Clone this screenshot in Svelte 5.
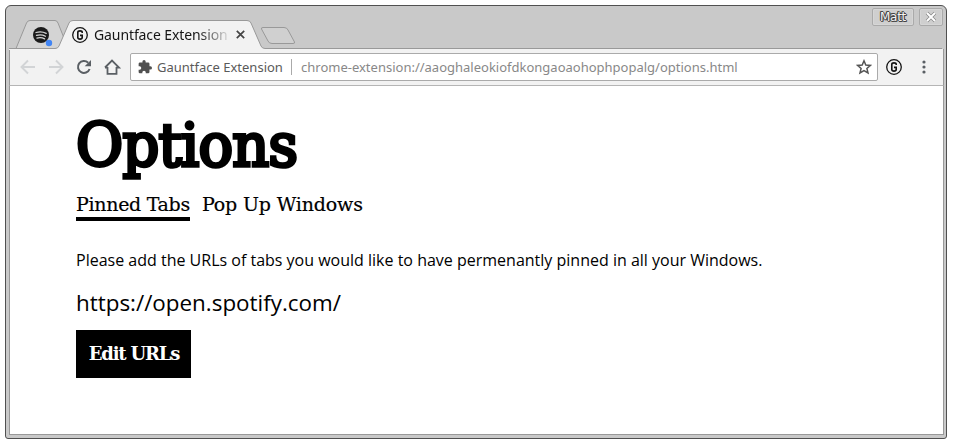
<script>
  const tabs = ['Pinned Tabs', 'Pop Up Windows'];
  let active = $state(0);
</script>

{#snippet gmark()}
  <svg class="g" width="18" height="18" viewBox="0 0 18 18" fill="none" stroke="#151515">
    <circle cx="9" cy="9" r="7.3" stroke-width="1.3" />
    <path d="M11.2 7V6.3Q11.2 4.9 9 4.9T6.8 6.5V11.5Q6.8 13.1 9 13.1T11.2 11.5V9.4H9" stroke-width="1.6" />
  </svg>
{/snippet}

<div class="window">
  <header class="strip">
    <svg class="shapes" width="933" height="44" viewBox="9 6 933 44">
      <path d="M16 48.5L26.5 23Q27.5 20.5 30 20.5H55Q57 20.5 58 23L66 43V48.5Z" fill="#d4d4d4" stroke="#999" />
      <path d="M8 48.5H55Q58 48.5 59 46L69 23Q70 20.5 73 20.5H247Q250 20.5 251 23L261 46Q262 48.5 265 48.5H943V51H8Z" fill="#f2f2f2" stroke="#999" />
      <path d="M263 27.5H284Q287 27.5 288 30L294.5 42Q295 43.5 293 43.5H272Q269 43.5 268 41L261.5 29Q261 27.5 263 27.5Z" fill="#d0d0d0" stroke="#999" />
    </svg>
    <div class="tabs">
      <svg class="spotify" width="22" height="22" viewBox="0 0 22 22" fill="none">
        <circle cx="9" cy="9" r="8" fill="#1b1b1b" />
        <path d="M4 6.5Q9.5 4.8 14.2 7.4M4.5 9.4Q9.3 8 13.4 10.2M5 12.1Q9.2 11 12.6 12.9" stroke="#d4d4d4" stroke-width="1.3" stroke-linecap="round" />
        <circle cx="17" cy="17" r="3.2" fill="#4285f4" />
      </svg>
      {@render gmark()}
      <span class="title">Gauntface Extension</span>
      <svg class="close" width="9" height="9" viewBox="0 0 9 9" stroke="#444" stroke-width="1.7"><path d="M.8.8L8.2 8.2M8.2.8L.8 8.2" /></svg>
    </div>
    <div class="controls">
      <span class="ctl user">Matt</span>
      <span class="ctl x"><svg width="12" height="12" viewBox="0 0 12 12"><path d="M2 2L10 10M10 2L2 10" stroke="#888" stroke-width="3.4" /><path d="M2 2L10 10M10 2L2 10" stroke="#fff" stroke-width="2" /></svg></span>
    </div>
  </header>

  <div class="toolbar">
    <svg class="nav-icons" width="112" height="24" viewBox="10 55 112 24" fill="none">
      <path d="M35 67H22M28 60.5L21.5 67L28 73.5M49 67H62M56 60.5L62.5 67L56 73.5" stroke="#d2d4d6" stroke-width="1.9" />
      <path d="M88.2 62.7A6 6 0 1 0 89.6 69" stroke="#5a5f64" stroke-width="2" />
      <path d="M91 60V66.3H84.7Z" fill="#5a5f64" />
      <path d="M107.5 67V73.8H116.5V67M105 67.5L112 60.5L119 67.5H116.5M105 67.5H107.5" stroke="#5a5f64" stroke-width="1.8" />
    </svg>
    <div class="omnibox">
      <svg class="puzzle" width="14" height="14" viewBox="1 1 22 22" fill="#505050"><path d="M20.5 11H19V7a2 2 0 0 0-2-2h-4V3.500a2.500 2.500 0 0 0-5 0V5H4a2 2 0 0 0-2 2v3.800h1.500a2.700 2.700 0 0 1 0 5.400H2V20a2 2 0 0 0 2 2h3.800v-1.500a2.700 2.700 0 0 1 5.400 0V22H17a2 2 0 0 0 2-2v-4h1.500a2.500 2.500 0 0 0 0-5z" /></svg>
      <span class="name">Gauntface Extension</span>
      <span class="sep"></span>
      <span class="url">chrome-extension://aaoghaleokiofdkongaoaohophpopalg/options.html</span>
      <svg class="star" width="16" height="16" viewBox="0 0 16 16"><path d="M8 1.8L9.8 6L14.3 6.400L10.900 9.400L12 13.900L8 11.500L4 13.900L5.100 9.400L1.700 6.400L6.200 6Z" fill="none" stroke="#555" stroke-width="1.5" /></svg>
    </div>
    {@render gmark()}
    <svg class="menu" width="4" height="14" viewBox="0 0 4 14" fill="#5a5f64"><circle cx="2" cy="2" r="1.6" /><circle cx="2" cy="7" r="1.6" /><circle cx="2" cy="12" r="1.6" /></svg>
  </div>

  <main>
    <h1>Options</h1>
    <nav>
      {#each tabs as tab, i}
        <button class="tab" class:active={active === i} onclick={() => (active = i)}>{tab}</button>
      {/each}
    </nav>
    <p class="intro">Please add the URLs of tabs you would like to have permenantly pinned in all your Windows.</p>
    <p class="site">https://open.spotify.com/</p>
    <button class="edit">Edit URLs</button>
  </main>
</div>

<style>
  :global(body) { background: #fff; }
  * { box-sizing: border-box; }
  svg { display: block; flex: none; }
  button { font: inherit; border: 0; background: none; padding: 0; color: inherit; }
  .window {
    width: 942px; height: 434px; margin: 5px; padding: 0 2px 3px 3px;
    border: 1px solid #505050; border-radius: 6px 6px 3px 3px;
    background: #c9c9c9; font-family: 'Noto Sans', sans-serif; overflow: hidden;
  }
  .strip { height: 43px; position: relative; }
  .shapes { position: absolute; left: 0; top: 0; }
  .tabs { position: relative; display: flex; align-items: center; height: 43px; padding: 14px 0 0 23px; }
  .spotify { margin: 4px 17px 0 0; }
  .title {
    width: 138px; margin-left: 5px; white-space: nowrap; font-size: 14px; letter-spacing: -0.1px; color: #151515;
    -webkit-mask-image: linear-gradient(90deg, #000 104px, transparent 138px);
    mask-image: linear-gradient(90deg, #000 104px, transparent 138px);
  }
  .close { margin-left: 4px; }
  .controls { position: absolute; right: 1px; top: 2px; display: flex; gap: 5px; }
  .ctl {
    height: 18px; border: 1px solid #aaa; border-radius: 2px; background: #cfcfcf; display: flex;
    align-items: center; justify-content: center; box-shadow: inset 0 0 0 1px #d6d6d6;
  }
  .user { width: 42px; color: #f5f5f5; font: 12px 'DejaVu Sans', sans-serif; letter-spacing: -0.3px; text-shadow: 1px 0 #444, -1px 0 #444, 0 1px #444, 0 -1px #444, 1px 1px #555, -1px -1px #555; }
  .x { width: 24px; }
  .toolbar { height: 37px; background: #f2f2f2; border-left: 1px solid #999; border-right: 1px solid #999; border-bottom: 1px solid #b5b5b5; display: flex; align-items: center; }
  .omnibox {
    width: 748px; height: 28px; margin-left: 8px; margin-right: 7px; background: #fff; border: 1px solid #aaa; border-radius: 2px;
    display: flex; align-items: center; padding: 0 5px 0 7px; white-space: nowrap; font-size: 13px;
  }
  .name { margin-left: 5px; color: #5a5a5a; width: 127px; }
  .sep { width: 1px; height: 16px; background: #aaa; margin: 0 9px 0 7px; }
  .url { color: #888; }
  .star { margin-left: auto; }
  .menu { margin-left: 19px; }
  main { height: 349px; background: #fff; border: 1px solid #999; border-top: 0; padding: 22px 66px 0; color: #000; }
  h1, .tab, .edit { font-family: 'DejaVu Serif', serif; }
  h1 { margin: 0; height: 76px; line-height: 76px; font-size: 59px; font-weight: 400; letter-spacing: -0.8px; -webkit-text-stroke: 3.6px #000; transform: scaleX(0.975); transform-origin: 0 0; }
  nav { display: flex; gap: 12px; height: 36px; margin-top: 9px; }
  .tab { height: 28px; padding-bottom: 2px; border-bottom: 4px solid transparent; font-size: 19px; line-height: 22px; white-space: nowrap; letter-spacing: -0.3px; -webkit-text-stroke: 0.2px #000; }
  .tab + .tab { letter-spacing: -0.15px; }
  .tab.active { border-color: #000; }
  p { margin: 0; }
  .intro { margin-top: 19px; font: 16px/24px 'Open Sans', sans-serif; }
  .site { margin-top: 14px; font: 22.4px/34px 'Open Sans', sans-serif; }
  .edit { display: block; width: 115px; height: 48px; margin-top: 10px; padding: 0 0 2px 1px; background: #000; color: #fff; font-size: 18px; font-weight: 700; letter-spacing: -1.2px; white-space: nowrap; }
</style>
